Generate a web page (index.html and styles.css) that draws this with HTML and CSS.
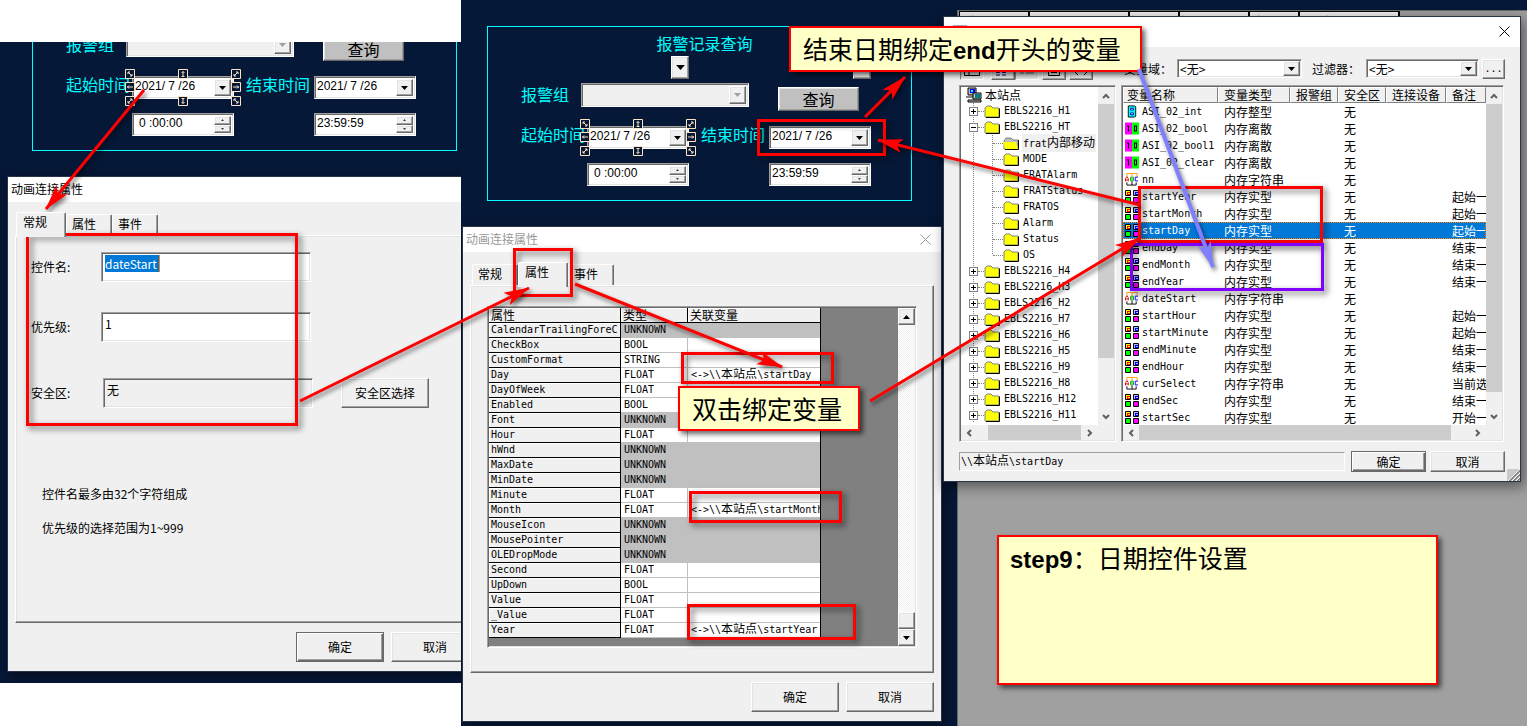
FILE: index.html
```html
<!DOCTYPE html>
<html lang="zh-CN">
<head>
<meta charset="utf-8">
<title>step9：日期控件设置</title>
<link rel="stylesheet" href="styles.css">
</head>
<body>
<svg class="defs" aria-hidden="true">
  <symbol id="down" viewBox="0 0 7 4"><path d="M0 0h7L3.500 4z"/></symbol>
  <symbol id="up" viewBox="0 0 7 4"><path d="M0 4h7L3.500 0z"/></symbol>
  <symbol id="cross" viewBox="0 0 11 11"><path d="M.5.5l10 10M10.500.5l-10 10" fill="none" stroke="currentColor"/></symbol>
  <symbol id="chev" viewBox="0 0 8 8"><path d="M1 6l3-3 3 3" fill="none" stroke="#606060" stroke-width="2"/></symbol>
  <symbol id="folder" viewBox="0 0 16 13"><path d="M1 3l2-2h4l2 2h6v9H1z" fill="#ff0" stroke="#808080"/><path d="M2 12.500h13.500V3.500" fill="none" stroke="#000"/></symbol>
  <symbol id="folder-open" viewBox="0 0 16 13"><path d="M1 4l2-3h5l2 2h5v9H1z" fill="#c0c0c0" stroke="#808080"/><path d="M0 5h13l2 7H2z" fill="#ff0"/><path d="M2 12.500h13.500V3" fill="none" stroke="#000"/></symbol>
  <symbol id="site" viewBox="0 0 17 16"><path d="M3 1h8v7H3z" fill="#c0c0c0" stroke="#000"/><path d="M5 2h5v4H5z" fill="#00f"/><path d="M6 3h2v2H6z" fill="#0ff"/><path d="M1 9h9v2H1z" fill="#808080"/><path d="M8 6h8v6H8z" fill="#c0c0c0" stroke="#000"/><path d="M10 7h5v4h-5z" fill="#008080"/><path d="M3 13h13v2H3z" fill="#c0c0c0" stroke="#000"/></symbol>
  <symbol id="int" viewBox="0 0 14 14"><path d="M3 1h7l1 1v10l-1 1H3z" fill="#0ff" stroke="#000"/><path d="M5.500 3.500h3v2h-3zM5.500 8.500h3v2h-3z" fill="#fff" stroke="#00a"/></symbol>
  <symbol id="bool" viewBox="0 0 14 12"><path d="M0 0h7v12H0z" fill="#f0f"/><path d="M7 0h7v12H7z" fill="#0f0"/><path d="M2 3h2v6H3V4H2zM9 3h3v6H9zM10 4v4h1V4z" fill="#000" fill-rule="evenodd"/></symbol>
  <symbol id="abc" viewBox="0 0 14 14"><path d="M1.500 4V.5h11V4M7 0v4" fill="none" stroke="#f90"/><path d="M1.500 10v3h10v-3M7 9v4" fill="none" stroke="#000"/><path d="M0 9V6l1.500-2L3 6v3M0 7.500h3" fill="none" stroke="#d00"/><path d="M5.500 4.500h3v4h-3zM5 6.500h4" fill="none" stroke="#0a0"/><path d="M13.500 4.500h-3v4h3" fill="none" stroke="#00f"/></symbol>
  <symbol id="real" viewBox="0 0 14 13"><path d="M.5.5h5v5h-5z" fill="#ff0" stroke="#000"/><path d="M8.500.5h5v5h-5z" fill="#b0b8ff" stroke="#000"/><path d="M.5 7.500h5v5h-5z" fill="#0f0" stroke="#000"/><path d="M8.500 7.500h5v5h-5z" fill="#f0f" stroke="#000"/><path d="M2 2h3v1H3v1h2v1H2z" fill="#f00"/><path d="M10 2h3v1h-2v1h2v1h-3z" fill="#00f"/></symbol>
  <symbol id="handles" viewBox="0 0 116 37">
    <g fill="#061838" stroke="#ffe4c4"><path d="M.5.5h9v9h-9zM53.500.5h9v9h-9zM106.500.5h9v9h-9zM.5 13.500h9v9h-9zM106.500 13.500h9v9h-9zM.5 27.500h9v9h-9zM53.500 27.500h9v9h-9zM106.500 27.500h9v9h-9z"/></g>
    <path d="M3 3l4 4M3 5V3h2M7 5v2H5M113 3l-4 4M111 3h2v2M109 5v2h2M7 30l-4 4M5 30h2v2M3 32v2h2M109 30l4 4M109 32v-2h2M113 32v2h-2M58 2.500v5M56.500 4L58 2.500 59.500 4M56.500 7.500h3M58 29.500v5M56.500 33l1.500 1.500 1.500-1.500M56.500 29.500h3M2 18h6M4 16.500L2.500 18 4 19.500M108 18h6M112 16.500l1.500 1.500-1.500 1.500" fill="none" stroke="#ffe4c4"/>
  </symbol>
</svg>

<main class="board">

<section class="scene scene-left" aria-label="画面一">
  <div class="hmi">
    <div class="hmi-title">报警记录查询</div>
    <div class="hmi-grid"><button class="drop raised c2" aria-label="展开"><svg><use href="#down"/></svg></button><button class="drop raised c4" aria-label="展开"><svg><use href="#down"/></svg></button></div>
    <div class="hmi-group"><label for="g1">报警组</label><span class="combo sunken off"><select id="g1" disabled><option></option></select><span class="arrow raised"><svg><use href="#down"/></svg></span></span><button class="query raised">查询</button></div>
    <div class="hmi-grid dates"><label for="a1">起始时间</label><span class="picker sunken selected"><input id="a1" value="2021/ 7 /26"><button class="arrow raised" aria-label="选择日期"><svg><use href="#down"/></svg></button><svg class="handles"><use href="#handles"/></svg></span><label class="end" for="a2">结束时间</label><span class="picker sunken"><input id="a2" value="2021/ 7 /26"><button class="arrow raised" aria-label="选择日期"><svg><use href="#down"/></svg></button></span></div>
    <div class="hmi-grid times"><span class="picker sunken c2"><input class="zero" aria-label="起始时刻" value="0 :00:00"><span class="spin"><button class="raised" aria-label="加"><svg><use href="#up"/></svg></button><button class="raised" aria-label="减"><svg><use href="#down"/></svg></button></span></span><span class="picker sunken c4"><input aria-label="结束时刻" value="23:59:59"><span class="spin"><button class="raised" aria-label="加"><svg><use href="#up"/></svg></button><button class="raised" aria-label="减"><svg><use href="#down"/></svg></button></span></span></div>
  </div>
  <section class="dialog props props-left">
    <header class="bar">动画连接属性</header>
    <nav class="tabs first"><button class="tab on">常规</button><button class="tab">属性</button><button class="tab">事件</button></nav>
    <div class="pane raised">
      <div class="form">
        <label for="f1">控件名:</label><span class="field sunken"><input id="f1" class="marked" value="dateStart"></span>
        <label for="f2">优先级:</label><span class="field sunken"><input id="f2" value="1"></span>
        <label for="f3">安全区:</label><span class="field sunken ro"><input id="f3" value="无" readonly></span><button class="btn raised">安全区选择</button>
      </div>
      <div class="hints"><p>控件名最多由32个字符组成</p><p>优先级的选择范围为1~999</p></div>
    </div>
    <footer class="actions"><button class="btn raised default">确定</button><button class="btn raised">取消</button></footer>
  </section>
</section>

<section class="scene scene-main" aria-label="画面二">
  <div class="hmi">
    <div class="hmi-title">报警记录查询</div>
    <div class="hmi-grid"><button class="drop raised c2" aria-label="展开"><svg><use href="#down"/></svg></button><button class="drop raised c4" aria-label="展开"><svg><use href="#down"/></svg></button></div>
    <div class="hmi-group"><label for="g2">报警组</label><span class="combo sunken off"><select id="g2" disabled><option></option></select><span class="arrow raised"><svg><use href="#down"/></svg></span></span><button class="query raised">查询</button></div>
    <div class="hmi-grid dates"><label for="b1">起始时间</label><span class="picker sunken selected"><input id="b1" value="2021/ 7 /26"><button class="arrow raised" aria-label="选择日期"><svg><use href="#down"/></svg></button><svg class="handles"><use href="#handles"/></svg></span><label class="end" for="b2">结束时间</label><span class="picker sunken"><input id="b2" value="2021/ 7 /26"><button class="arrow raised" aria-label="选择日期"><svg><use href="#down"/></svg></button></span></div>
    <div class="hmi-grid times"><span class="picker sunken c2"><input class="zero" aria-label="起始时刻" value="0 :00:00"><span class="spin"><button class="raised" aria-label="加"><svg><use href="#up"/></svg></button><button class="raised" aria-label="减"><svg><use href="#down"/></svg></button></span></span><span class="picker sunken c4"><input aria-label="结束时刻" value="23:59:59"><span class="spin"><button class="raised" aria-label="加"><svg><use href="#up"/></svg></button><button class="raised" aria-label="减"><svg><use href="#down"/></svg></button></span></span></div>
  </div>

  <section class="dialog props props-main">
    <header class="bar dim">动画连接属性<button class="close" aria-label="关闭"><svg><use href="#cross"/></svg></button></header>
    <nav class="tabs"><button class="tab">常规</button><button class="tab on">属性</button><button class="tab">事件</button></nav>
    <div class="pane raised">
      <div class="gridbox sunken">
        <table class="grid">
          <colgroup><col class="g-name"><col class="g-type"><col class="g-var"></colgroup>
          <thead><tr class="zh"><th>属性</th><th>类型</th><th>关联变量</th></tr></thead>
          <tbody>
          <tr class="na"><th>CalendarTrailingForeC</th><td>UNKNOWN</td><td></td></tr>
          <tr><th>CheckBox</th><td>BOOL</td><td></td></tr>
          <tr><th>CustomFormat</th><td>STRING</td><td></td></tr>
          <tr><th>Day</th><td>FLOAT</td><td>&lt;-&gt;\\<span class="zh">本站点</span>\startDay</td></tr>
          <tr><th>DayOfWeek</th><td>FLOAT</td><td></td></tr>
          <tr><th>Enabled</th><td>BOOL</td><td></td></tr>
          <tr class="na"><th>Font</th><td>UNKNOWN</td><td></td></tr>
          <tr><th>Hour</th><td>FLOAT</td><td></td></tr>
          <tr class="na"><th>hWnd</th><td>UNKNOWN</td><td></td></tr>
          <tr class="na"><th>MaxDate</th><td>UNKNOWN</td><td></td></tr>
          <tr class="na"><th>MinDate</th><td>UNKNOWN</td><td></td></tr>
          <tr><th>Minute</th><td>FLOAT</td><td></td></tr>
          <tr><th>Month</th><td>FLOAT</td><td>&lt;-&gt;\\<span class="zh">本站点</span>\startMonth</td></tr>
          <tr class="na"><th>MouseIcon</th><td>UNKNOWN</td><td></td></tr>
          <tr class="na"><th>MousePointer</th><td>UNKNOWN</td><td></td></tr>
          <tr class="na"><th>OLEDropMode</th><td>UNKNOWN</td><td></td></tr>
          <tr><th>Second</th><td>FLOAT</td><td></td></tr>
          <tr><th>UpDown</th><td>BOOL</td><td></td></tr>
          <tr><th>Value</th><td>FLOAT</td><td></td></tr>
          <tr><th>_Value</th><td>FLOAT</td><td></td></tr>
          <tr><th>Year</th><td>FLOAT</td><td>&lt;-&gt;\\<span class="zh">本站点</span>\startYear</td></tr>
          </tbody>
        </table>
        <div class="oldbar"><button class="raised" aria-label="向上"><svg><use href="#up"/></svg></button><span class="thumb raised"></span><button class="raised" aria-label="向下"><svg><use href="#down"/></svg></button></div>
      </div>
    </div>
    <footer class="actions"><button class="btn raised">确定</button><button class="btn raised">取消</button></footer>
  </section>

  <section class="report">
    <div class="report-head"><span class="w70">报警时间</span><span class="w100">信息</span><span class="w50">报警类型</span><span class="w70">报警恢复时间</span><span class="w50">报警组</span><span class="w100">报警文件</span></div>
  </section>

  <section class="dialog vars">
    <header class="bar tall"><span class="app-icon"></span><button class="close" aria-label="关闭"><svg><use href="#cross"/></svg></button></header>
    <div class="tools">
      <div class="toolset">
        <button class="tool pressed" aria-label="列表"><svg viewBox="0 0 16 14"><path d="M.5.5h15v13H.5zM5 0v14M5 9h11" fill="none" stroke="#000"/></svg></button>
        <button class="tool raised gap-l" aria-label="小图标"><svg viewBox="0 0 16 14"><path d="M1.500 7.500h3v3h-3zM7.500 7.500h3v3h-3zM13 9h3M1 13h4M7 13h4" fill="none" stroke="#008"/></svg></button>
        <button class="tool pressed" aria-label="详细"><svg viewBox="0 0 16 14"><path d="M1 11h4M7 11h8M1 8h4M7 8h8" fill="none" stroke="#666"/></svg></button>
        <button class="tool raised gap-s" aria-label="编辑"><svg viewBox="0 0 16 14"><path d="M2.500.5h11v13h-11zM5 8h6M5 10.500h6" fill="none" stroke="#000"/></svg></button>
        <button class="tool raised gap-s" aria-label="切换"><svg viewBox="0 0 16 14"><path d="M5 7l-3 3 3 3M11 7l3 3-3 3" fill="none" stroke="#000"/></svg></button>
      </div>
      <label class="zh" for="domain">变量域：</label>
      <span class="combo sunken dom"><select id="domain"><option>&lt;无&gt;</option></select><span class="arrow raised"><svg><use href="#down"/></svg></span></span>
      <label class="zh flt" for="filter">过滤器：</label>
      <span class="combo sunken fil"><select id="filter"><option>&lt;无&gt;</option></select><span class="arrow raised"><svg><use href="#down"/></svg></span></span>
      <button class="more raised">...</button>
    </div>
    <div class="split">
      <div class="box tree-box sunken">
        <div class="view">
          <div class="root"><svg class="i-site"><use href="#site"/></svg><span class="zh">本站点</span></div>
          <ul class="tree">
            <li><i class="ex plus"></i><svg><use href="#folder"/></svg>EBLS2216_H1</li>
            <li><i class="ex"></i><svg><use href="#folder"/></svg>EBLS2216_HT</li>
            <li class="kids"><ul>
              <li><svg><use href="#folder-open"/></svg><span class="hot">frat<span class="zh">内部移动</span></span></li>
              <li><svg><use href="#folder"/></svg>MODE</li>
              <li><svg><use href="#folder"/></svg>FRATAlarm</li>
              <li><svg><use href="#folder"/></svg>FRATStatus</li>
              <li><svg><use href="#folder"/></svg>FRATOS</li>
              <li><svg><use href="#folder"/></svg>Alarm</li>
              <li><svg><use href="#folder"/></svg>Status</li>
              <li><svg><use href="#folder"/></svg>OS</li>
            </ul></li>
            <li><i class="ex plus"></i><svg><use href="#folder"/></svg>EBLS2216_H4</li>
            <li><i class="ex plus"></i><svg><use href="#folder"/></svg>EBLS2216_H3</li>
            <li><i class="ex plus"></i><svg><use href="#folder"/></svg>EBLS2216_H2</li>
            <li><i class="ex plus"></i><svg><use href="#folder"/></svg>EBLS2216_H7</li>
            <li><i class="ex plus"></i><svg><use href="#folder"/></svg>EBLS2216_H6</li>
            <li><i class="ex plus"></i><svg><use href="#folder"/></svg>EBLS2216_H5</li>
            <li><i class="ex plus"></i><svg><use href="#folder"/></svg>EBLS2216_H9</li>
            <li><i class="ex plus"></i><svg><use href="#folder"/></svg>EBLS2216_H8</li>
            <li><i class="ex plus"></i><svg><use href="#folder"/></svg>EBLS2216_H12</li>
            <li><i class="ex plus"></i><svg><use href="#folder"/></svg>EBLS2216_H11</li>
          </ul>
        </div>
        <div class="vbar"><svg><use href="#chev"/></svg><i class="vthumb t-tree"></i><svg class="r180"><use href="#chev"/></svg></div>
        <div class="hbar"><svg class="r270"><use href="#chev"/></svg><i class="hthumb h-tree"></i><svg class="r90"><use href="#chev"/></svg></div>
      </div>
      <div class="box list-box sunken">
        <div class="view">
          <table class="list">
            <colgroup><col class="l1"><col class="l2"><col class="l3"><col class="l3"><col class="l4"><col></colgroup>
            <thead><tr class="zh"><th>变量名称</th><th>变量类型</th><th>报警组</th><th>安全区</th><th>连接设备</th><th>备注</th></tr></thead>
            <tbody>
            <tr><td><svg><use href="#int"/></svg>ASI_02_int</td><td>内存整型</td><td></td><td>无</td><td></td><td></td></tr>
            <tr><td><svg><use href="#bool"/></svg>ASI_02_bool</td><td>内存离散</td><td></td><td>无</td><td></td><td></td></tr>
            <tr><td><svg><use href="#bool"/></svg>ASI_02_bool1</td><td>内存离散</td><td></td><td>无</td><td></td><td></td></tr>
            <tr><td><svg><use href="#bool"/></svg>ASI_02_clear</td><td>内存离散</td><td></td><td>无</td><td></td><td></td></tr>
            <tr><td><svg><use href="#abc"/></svg>nn</td><td>内存字符串</td><td></td><td>无</td><td></td><td></td></tr>
            <tr><td><svg><use href="#real"/></svg>startYear</td><td>内存实型</td><td></td><td>无</td><td></td><td>起始一年</td></tr>
            <tr><td><svg><use href="#real"/></svg>startMonth</td><td>内存实型</td><td></td><td>无</td><td></td><td>起始一月</td></tr>
            <tr class="sel"><td><svg><use href="#real"/></svg>startDay</td><td>内存实型</td><td></td><td>无</td><td></td><td>起始一天</td></tr>
            <tr><td><svg><use href="#real"/></svg>endDay</td><td>内存实型</td><td></td><td>无</td><td></td><td>结束一天</td></tr>
            <tr><td><svg><use href="#real"/></svg>endMonth</td><td>内存实型</td><td></td><td>无</td><td></td><td>结束一月</td></tr>
            <tr><td><svg><use href="#real"/></svg>endYear</td><td>内存实型</td><td></td><td>无</td><td></td><td>结束一年</td></tr>
            <tr><td><svg><use href="#abc"/></svg>dateStart</td><td>内存字符串</td><td></td><td>无</td><td></td><td></td></tr>
            <tr><td><svg><use href="#real"/></svg>startHour</td><td>内存实型</td><td></td><td>无</td><td></td><td>起始一时</td></tr>
            <tr><td><svg><use href="#real"/></svg>startMinute</td><td>内存实型</td><td></td><td>无</td><td></td><td>起始一分</td></tr>
            <tr><td><svg><use href="#real"/></svg>endMinute</td><td>内存实型</td><td></td><td>无</td><td></td><td>结束一分</td></tr>
            <tr><td><svg><use href="#real"/></svg>endHour</td><td>内存实型</td><td></td><td>无</td><td></td><td>结束一时</td></tr>
            <tr><td><svg><use href="#abc"/></svg>curSelect</td><td>内存字符串</td><td></td><td>无</td><td></td><td>当前选择</td></tr>
            <tr><td><svg><use href="#real"/></svg>endSec</td><td>内存实型</td><td></td><td>无</td><td></td><td>结束一秒</td></tr>
            <tr><td><svg><use href="#real"/></svg>startSec</td><td>内存实型</td><td></td><td>无</td><td></td><td>开始一秒</td></tr>
            </tbody>
          </table>
        </div>
        <div class="vbar"><svg><use href="#chev"/></svg><i class="vthumb t-list"></i><svg class="r180"><use href="#chev"/></svg></div>
        <div class="hbar"><svg class="r270"><use href="#chev"/></svg><i class="hthumb h-list"></i><svg class="r90"><use href="#chev"/></svg></div>
      </div>
    </div>
    <footer class="status"><output class="path">\\<span class="zh">本站点</span>\startDay</output><button class="raised default">确定</button><button class="raised">取消</button></footer>
    <svg class="grip" viewBox="0 0 13 12"><path d="M0 0h13v12H0z" fill="#c8c8c8"/><path d="M2 12L13 1M6 12l7-7M10 12l3-3" stroke="#808080" stroke-width="2"/><path d="M1 12L13 0M5 12l8-8M9 12l4-4" stroke="#fff"/></svg>
  </section>
</section>

<div class="frame f-form"></div>
<div class="frame f-tab"></div>
<div class="frame f-day"></div>
<div class="frame f-month"></div>
<div class="frame f-year"></div>
<div class="frame f-date"></div>
<div class="frame f-start"></div>
<div class="frame f-end"></div>
<p class="note n-end">结束日期绑定<b>end</b>开头的变量</p>
<p class="note n-bind">双击绑定变量</p>
<p class="note n-step"><b>step9</b>：日期控件设置</p>
<svg class="arrows" width="1527" height="726" aria-hidden="true">
  <defs>
    <marker id="tip" markerUnits="userSpaceOnUse" markerWidth="30" markerHeight="16" refX="27" refY="8" orient="auto"><path d="M28 8L2 1l6 7-6 7z" fill="#f00"/></marker>
    <marker id="tip-b" markerUnits="userSpaceOnUse" markerWidth="30" markerHeight="16" refX="27" refY="8" orient="auto"><path d="M28 8L2 1l6 7-6 7z" fill="#8080ff"/></marker>
  </defs>
  <g class="red">
    <path d="M144 90L46 209"/><path d="M300 401L529 288"/><path d="M575 284L782 367"/><path d="M870 401L1140 238"/><path d="M865 117L905 77"/><path d="M1140 205L878 140"/>
  </g>
  <path class="blue" d="M1139 69L1213 267"/>
</svg>
</main>
</body>
</html>
```
FILE: styles.css
```css
* { box-sizing: border-box; }
body { margin: 0; background: #fff; color: #000; font: 12px/16px "Noto Sans CJK SC", sans-serif; }
button, input, select { font: inherit; color: inherit; margin: 0; padding: 0; border: 0; background: none; outline: 0; border-radius: 0; appearance: none; min-width: 0; }
p, ul { margin: 0; padding: 0; list-style: none; }
svg { display: block; flex: none; }
.defs { position: absolute; width: 0; height: 0; }
.board { position: relative; min-height: 100vh; overflow: hidden; }
.zh { font-family: "Noto Sans CJK SC", sans-serif; font-size: 12px; }

/* bevels */
.raised { background: #f0f0f0; border: 1px solid; border-color: #fff #696969 #696969 #fff; box-shadow: inset -1px -1px #a0a0a0, inset 1px 1px #e3e3e3; }
.sunken { background: #fff; border: 1px solid; border-color: #a0a0a0 #fff #fff #a0a0a0; box-shadow: inset 1px 1px #696969, inset -1px -1px #e3e3e3; padding: 2px; }
.default { border-color: #696969; box-shadow: inset 1px 1px #fff, inset -1px -1px #696969, inset -2px -2px #a0a0a0; }

/* canvases behind the windows */
.scene { position: absolute; background: #061838; overflow: hidden; }
.scene-left { left: 0; top: 42px; width: 461px; height: 641px; }
.scene-main { left: 461px; top: 0; right: 0; bottom: 0; }

.hmi { position: absolute; width: 425px; border: 1px solid #0ff; padding: 6px 0 14px 33px; color: #0ff; font-size: 16px; }
.scene-left .hmi { left: 32px; top: -66px; }
.scene-main .hmi { left: 26px; top: 26px; }
.hmi-title { text-align: center; height: 23px; line-height: 20px; padding-right: 23px; }
.hmi-grid { display: grid; grid-template-columns: 66px 102px 80px 102px; align-items: start; }
.hmi-grid label, .hmi-group label { line-height: 16px; white-space: nowrap; }
.hmi-grid .end { padding-left: 12px; }
.c2 { grid-column: 2; }
.c4 { grid-column: 4; }
.drop { width: 18px; height: 23px; justify-self: end; display: grid; place-items: center; }
.drop svg { width: 9px; height: 5px; }
.hmi-group { display: flex; align-items: start; margin-top: 4px; height: 28px; }
.hmi-group label { width: 60px; padding-top: 3px; }
.hmi-group .combo { width: 168px; height: 24px; }
.query { width: 81px; height: 24px; margin: 4px 0 0 29px; background: #c0c0c0; color: #000; line-height: 18px; }
.dates { margin-top: 15px; }
.times { margin-top: 14px; }
.picker { position: relative; display: flex; height: 23px; color: #000; font: 12px/14px "Liberation Sans", sans-serif; }
.picker input { flex: 1; width: 0; height: 14px; }
.picker .zero { padding-left: 4px; }
.arrow { width: 17px; display: grid; place-items: center; flex: none; }
.arrow svg { width: 7px; height: 4px; }
.spin { display: grid; width: 17px; grid-template-rows: 1fr 1fr; }
.spin button { display: grid; place-items: center; }
.spin svg { width: 3px; height: 2px; }
.handles { position: absolute; left: -8px; top: -8px; width: 116px; height: 37px; }
.combo { display: flex; color: #000; }
.combo select { flex: 1; width: 0; padding-left: 3px; opacity: 1; }
.off { background: #f0f0f0; }
.off svg { fill: #a0a0a0; }

/* dialogs */
.dialog { position: absolute; background: #f0f0f0; box-shadow: 0 0 0 1px #2a3448, 2px 4px 12px 2px rgba(0, 0, 0, .45); }
.bar { display: flex; justify-content: space-between; align-items: center; height: 25px; background: #fff; padding: 0 1px 1px 3px; }
.dim { color: #999; }
.close { width: 30px; height: 24px; display: grid; place-items: center; }
.close svg { width: 11px; height: 11px; }
.props { width: 478px; padding-bottom: 9px; }
.props-left { left: 8px; top: 135px; }
.props-main { left: 2px; top: 227px; }
.tabs { display: flex; align-items: end; height: 33px; padding-left: 9px; }
.tabs.first { padding-left: 8px; }
.tab { width: 46px; height: 21px; padding: 0 0 2px 5px; text-align: left; background: #f0f0f0; border: solid; border-width: 1px 1px 0; border-color: #fff #696969 #fff #fff; box-shadow: inset -1px 0 #a0a0a0; border-radius: 2px 2px 0 0; }
.tab.on { position: relative; z-index: 1; width: 50px; height: 25px; margin-bottom: -2px; padding: 0 0 6px 6px; }
.pane { margin: 0 7px; height: 388px; padding: 16px 15px; }
.form { display: grid; grid-template-columns: 70px 210px 88px; row-gap: 30px; align-items: center; }
.form label { grid-column: 1; }
.field { height: 30px; padding: 2px 3px; }
.field input { display: block; width: 100%; height: 17px; }
.field .marked { width: 55px; background: #0078d7; color: #fff; border-right: 1px solid #f80; }
.ro { background: #f0f0f0; }
.form .ro { margin-left: 2px; margin-right: -2px; }
.form .btn { margin-left: 30px; }
.form > :nth-child(n+5) { margin-top: 6px; }
.hints { padding: 69px 0 0 11px; line-height: 34px; }
.btn { width: 88px; height: 30px; }
.actions { display: flex; justify-content: end; gap: 7px; margin: 9px 7px 0; }

.props-main .pane { padding: 20px 16px; }
.gridbox { display: flex; justify-content: space-between; align-items: start; height: 342px; background: #808080; padding: 1px; }
.grid { table-layout: fixed; width: 332px; border-collapse: separate; border-spacing: 0; border-right: 1px solid #000; font: 10px/14px "DejaVu Sans Mono", "Noto Sans CJK SC", monospace; }
.g-name { width: 132px; }
.g-type { width: 67px; }
.grid th, .grid td { height: 15px; padding: 0 0 0 3px; text-align: left; font-weight: normal; overflow: hidden; white-space: nowrap; line-height: 14px; background: #fff; border: solid #c0c0c0; border-width: 0 1px 1px 0; }
.grid th { background: #f0f0f0; border-color: #000; box-shadow: inset 1px 1px #fff; padding-left: 2px; }
.grid tr.zh th { line-height: 12px; }
.grid span.zh { line-height: 10px; }
.grid td:last-child, .grid thead th:last-child { border-right: 0; }
.grid .na td { background: #c0c0c0; }
.oldbar { display: flex; flex-direction: column; width: 17px; height: 338px; background: repeating-conic-gradient(#fff 0 25%, #f0f0f0 0 50%) 0 0 / 2px 2px; }
.oldbar button, .oldbar .thumb { height: 17px; display: grid; place-items: center; }
.oldbar .thumb { margin-top: auto; }
.oldbar svg { width: 7px; height: 4px; }

/* report table under the variable picker */
.report { position: absolute; left: 496px; right: 0; top: 10px; bottom: 0; background: #a0a0a0; border: solid #696969; border-width: 1px 0 0 1px; }
.report-head { display: flex; width: 441px; height: 22px; margin-left: 1px; background: #f0f0f0; border: 1px solid #000; overflow: hidden; }
.report-head span { flex: none; text-align: center; line-height: 20px; border-right: 2px solid #000; overflow: hidden; white-space: nowrap; }
.w50 { width: 50px; }
.w70 { width: 70px; }
.w100 { width: 100px; }

.vars { left: 483px; top: 17px; width: 576px; padding-bottom: 9px; font: 10px/16px "DejaVu Sans Mono", "Noto Sans CJK SC", monospace; }
.tall { height: 30px; }
.app-icon { width: 14px; height: 14px; margin-left: 6px; background: #b8b8b8; }
.tools { display: flex; align-items: center; height: 38px; padding: 5px 15px 0 16px; }
.toolset { display: flex; width: 164px; }
.tool { width: 24px; height: 22px; display: grid; place-items: center; }
.tool svg { width: 16px; height: 14px; }
.pressed { border: 1px solid; border-color: #808080 #fff #fff #808080; background: #e4e4e4; }
.gap-l { margin-left: 7px; }
.gap-s { margin-left: 3px; }
.tools label { width: 53px; white-space: nowrap; }
.tools .combo { height: 19px; font-family: "Noto Sans CJK SC", sans-serif; font-size: 12px; padding: 1px; }
.tools .combo select { height: 15px; line-height: 15px; padding-left: 1px; }
.dom { width: 125px; }
.tools .flt { margin-left: 10px; width: 54px; }
.fil { width: 113px; }
.more { width: 23px; height: 20px; margin-left: 3px; line-height: 12px; }
.split { display: flex; gap: 5px; padding: 0 16px 0 15px; }
.box { display: grid; grid-template-columns: 1fr 16px; grid-template-rows: 338px 15px; padding: 1px; background: #f0f0f0; }
.tree-box { width: 157px; }
.list-box { flex: 1; min-width: 0; }
.view { background: #fff; overflow: hidden; }
.root { display: flex; align-items: center; height: 16px; gap: 3px; padding-left: 4px; }
.i-site { width: 17px; height: 16px; }
.tree { background: repeating-linear-gradient(#808080 0 1px, transparent 1px 2px) 12px 0 / 1px 100% no-repeat; }
.tree li { display: flex; align-items: center; height: 16px; padding-left: 8px; white-space: nowrap; }
.tree li > svg { width: 16px; height: 13px; margin-right: 4px; }
.ex { position: relative; flex: none; width: 9px; height: 9px; margin-right: 6px; border: 1px solid #808080; background: linear-gradient(#000, #000) 1px 3px / 5px 1px no-repeat, #fff; }
.ex::after { content: ""; position: absolute; left: 8px; top: 3px; width: 6px; border-top: 1px dotted #808080; }
.tree .plus { background: linear-gradient(#000, #000) 1px 3px / 5px 1px no-repeat, linear-gradient(#000, #000) 3px 1px / 1px 5px no-repeat, #fff; }
.tree .kids { display: block; height: auto; padding: 0; }
.kids ul { background: repeating-linear-gradient(#808080 0 1px, transparent 1px 2px) 31px 0 / 1px 120px no-repeat; }
.kids li { padding-left: 32px; }
.kids li::before { content: ""; width: 10px; border-top: 1px dotted #808080; }
.hot { background: #f0f0f0; margin-left: -1px; padding: 0 1px; }
.vbar { display: flex; flex-direction: column; align-items: center; padding: 5px 0 4px; }
.vbar svg, .hbar svg { width: 8px; height: 8px; }
.vthumb { width: 16px; margin: 4px 0 auto; background: #cdcdcd; }
.t-tree { height: 254px; }
.t-list { height: 288px; }
.hbar { grid-column: 1 / 3; display: flex; align-items: center; padding: 0 20px 0 4px; }
.hthumb { height: 15px; margin: 0 auto 0 6px; background: #cdcdcd; }
.list-box .hthumb { margin-left: 4px; }
.tree-box .h-tree { width: 93px; margin-left: 15px; }
.h-list { width: 312px; }
.r90 { transform: rotate(90deg); }
.r180 { transform: rotate(180deg); }
.r270 { transform: rotate(270deg); }
.list { table-layout: fixed; width: 100%; border-spacing: 0; }
.l1 { width: 95px; }
.l2 { width: 72px; }
.l3 { width: 48px; }
.l4 { width: 60px; }
.list th { height: 16px; padding: 0 0 0 5px; text-align: left; font-weight: normal; line-height: 12px; white-space: nowrap; background: #f0f0f0; border: 1px solid; border-color: #fff #808080 #808080 #fff; }
.list th:first-child { padding-left: 3px; }
.list td { height: 17px; padding: 0 0 0 6px; line-height: 16px; overflow: hidden; white-space: nowrap; font-family: "Noto Sans CJK SC", sans-serif; font-size: 12px; }
.list td:first-child { display: flex; align-items: center; gap: 3px; padding-left: 2px; font-family: "DejaVu Sans Mono", monospace; font-size: 10px; }
.list svg { width: 14px; height: 13px; }
.sel td { background: #0078d7; color: #fff; }
.sel { outline: 1px dotted #f80; outline-offset: -1px; }
.status { display: flex; gap: 4px; padding: 9px 15px 0; }
.path { flex: 1; height: 19px; margin: 1px 2px 0 0; line-height: 16px; border: 1px solid; border-color: #a0a0a0 #fff #fff #a0a0a0; padding-left: 1px; }
.path .zh { line-height: 14px; }
.status button { width: 75px; height: 21px; font-family: "Noto Sans CJK SC", sans-serif; font-size: 12px; line-height: 16px; }
.grip { position: absolute; right: 0; bottom: 0; width: 13px; height: 12px; }

/* annotations */
.frame { position: absolute; border: 3px solid #f00; filter: drop-shadow(3px 3px 3px rgba(0, 0, 0, .6)); }
.f-form { left: 26px; top: 233px; width: 272px; height: 193px; }
.f-tab { left: 513px; top: 248px; width: 60px; height: 49px; }
.f-day { left: 681px; top: 352px; width: 153px; height: 32px; }
.f-month { left: 689px; top: 491px; width: 153px; height: 32px; }
.f-year { left: 687px; top: 604px; width: 169px; height: 36px; }
.f-date { left: 757px; top: 119px; width: 129px; height: 37px; }
.f-start { left: 1138px; top: 186px; width: 185px; height: 57px; }
.f-end { left: 1130px; top: 243px; width: 194px; height: 48px; border-color: #8000ff; }
.note { position: absolute; border: 2px solid #f00; background: #ffffc8; box-shadow: 3px 3px 5px rgba(0, 0, 0, .6); font-size: 25px; line-height: 40px; padding-left: 12px; white-space: nowrap; }
.note b { font: bold 24px/24px "Liberation Sans", sans-serif; }
.n-end { left: 789px; top: 26px; width: 353px; height: 46px; }
.n-bind { left: 678px; top: 386px; width: 182px; height: 45px; }
.n-step { left: 997px; top: 535px; width: 441px; height: 150px; padding-left: 11px; }
.arrows { position: absolute; left: 0; top: 0; pointer-events: none; filter: drop-shadow(2px 3px 2px rgba(0, 0, 0, .5)); }
.red path { stroke: #f00; stroke-width: 3px; marker-end: url(#tip); }
.arrows marker path { stroke: none; }
.blue { stroke: #8080ff; stroke-width: 4px; marker-end: url(#tip-b); }
```
